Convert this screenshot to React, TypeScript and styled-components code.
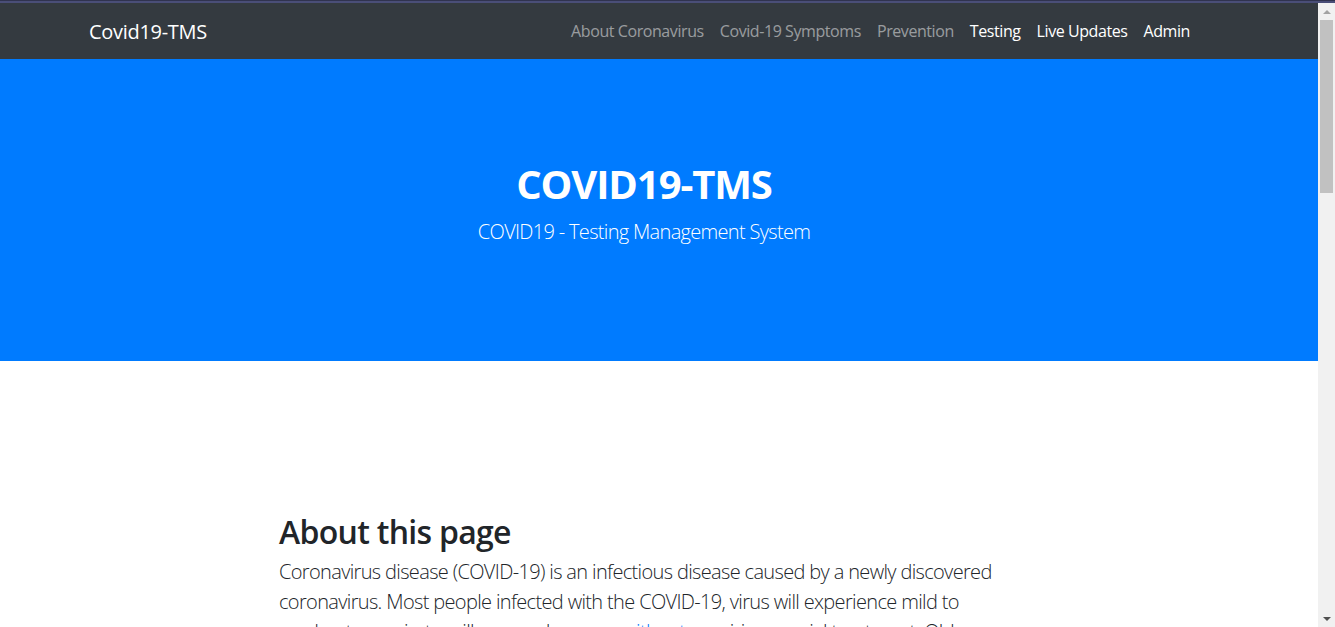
import React from "react";
import styled, { createGlobalStyle } from "styled-components";

const Global = createGlobalStyle`
  html, body { margin: 0; padding: 0; height: 100%; overflow: hidden; }
  body { font-family: "Open Sans", "Noto Sans", sans-serif; color: #212529; background: #fff; }
  #root { height: 100%; }
  * { box-sizing: border-box; }
`;

const Frame = styled.div`
  display: flex;
  flex-direction: column;
  height: 100vh;
`;

const TopLine = styled.div`
  height: 3px;
  flex: none;
  background: linear-gradient(#30334f 0, #30334f 1px, #4a4e78 1px);
`;

const Viewport = styled.div`
  flex: 1;
  display: flex;
  min-height: 0;
`;

const Page = styled.div`
  flex: 1;
  overflow: hidden;
  min-width: 0;
`;

const Scrollbar = styled.div`
  width: 17px;
  flex: none;
  background: #f1f1f1;
  display: flex;
  flex-direction: column;
  align-items: center;
`;

const Arrow = styled.div<{ $down?: boolean }>`
  width: 0;
  height: 0;
  border-left: 4px solid transparent;
  border-right: 4px solid transparent;
  ${(p) =>
    p.$down
      ? "border-top: 4px solid #505050; margin-top: auto; margin-bottom: 6px;"
      : "border-bottom: 4px solid #a3a3a3; margin-top: 7px;"}
`;

const Thumb = styled.div`
  width: 13px;
  height: 173px;
  margin-top: 6px;
  background: #c1c1c1;
`;

const Navbar = styled.nav`
  background: #343a40;
  height: 56px;
  display: flex;
  align-items: center;
  padding: 0 128px 0 89px;
`;

const Brand = styled.a`
  color: #fff;
  font-size: 20px;
  letter-spacing: -0.3px;
  text-decoration: none;
  margin-right: auto;
`;

const NavList = styled.div`
  display: flex;
  gap: 16px;
`;

const NavLink = styled.a<{ $active?: boolean }>`
  font-size: 16px;
  letter-spacing: -0.42px;
  text-decoration: none;
  color: ${(p) => (p.$active ? "#fff" : "rgba(255,255,255,0.5)")};
`;

const Hero = styled.header`
  background: #007bff;
  height: 302px;
  display: flex;
  flex-direction: column;
  align-items: center;
  padding: 101px 30px 0 0;
  color: #fff;
`;

const HeroTitle = styled.h1`
  margin: 0;
  font-size: 40px;
  line-height: 48px;
  font-weight: 700;
  letter-spacing: -1.1px;
`;

const HeroLead = styled.p`
  margin: 9px 0 0;
  font-size: 20px;
  line-height: 30px;
  font-weight: 300;
  letter-spacing: -0.68px;
`;

const Section = styled.section`
  padding: 152px 0 0 279px;
`;

const Content = styled.div`
  width: 740px;
`;

const Heading = styled.h2`
  margin: 0 0 6px;
  font-size: 32px;
  line-height: 38px;
  font-weight: 600;
  letter-spacing: -0.7px;
  color: #212529;
`;

const Lead = styled.p`
  margin: 0;
  font-size: 20px;
  line-height: 30px;
  font-weight: 300;
  letter-spacing: -0.65px;
  color: #212529;
`;

const Link = styled.a`
  color: #007bff;
  text-decoration: none;
`;

export default function App() {
  return (
    <>
      <Global />
      <Frame>
        <TopLine />
        <Viewport>
          <Page>
            <Navbar>
              <Brand href="#">Covid19-TMS</Brand>
              <NavList>
                <NavLink href="#">About Coronavirus</NavLink>
                <NavLink href="#">Covid-19 Symptoms</NavLink>
                <NavLink href="#">Prevention</NavLink>
                <NavLink href="#" $active>Testing</NavLink>
                <NavLink href="#" $active>Live Updates</NavLink>
                <NavLink href="#" $active>Admin</NavLink>
              </NavList>
            </Navbar>
            <Hero>
              <HeroTitle>COVID19-TMS</HeroTitle>
              <HeroLead>COVID19 - Testing Management System</HeroLead>
            </Hero>
            <Section>
              <Content>
                <Heading>About this page</Heading>
                <Lead>
                  Coronavirus disease (COVID-19) is an infectious disease caused by a newly discovered
                  coronavirus. Most people infected with the COVID-19, virus will experience mild to
                  moderate respiratory illness and recover <Link href="#">without</Link> requiring special
                  treatment. Older people, and those with underlying medical problems like cardiovascular
                  disease, diabetes, chronic respiratory disease, and cancer are more likely to develop
                  serious illness.
                </Lead>
              </Content>
            </Section>
          </Page>
          <Scrollbar>
            <Arrow />
            <Thumb />
            <Arrow $down />
          </Scrollbar>
        </Viewport>
      </Frame>
    </>
  );
}
